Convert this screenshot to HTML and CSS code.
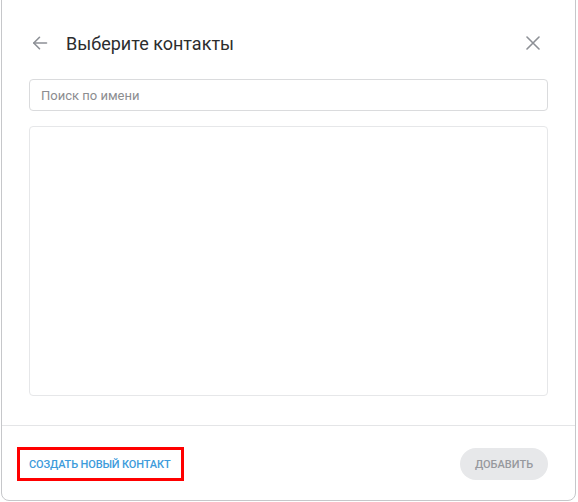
FILE: index.html
```html
<!DOCTYPE html>
<html lang="ru">
<head>
  <meta charset="UTF-8">
  <title>Выберите контакты</title>
  <link rel="stylesheet" href="styles.css">
</head>
<body>
  <div class="dialog">
    <div class="dialog-body">
      <div class="dialog-header">
        <button class="icon-btn back-btn" type="button" aria-label="Назад">
          <svg width="16" height="16" viewBox="0 0 16 16" fill="none" stroke="currentColor" stroke-width="1.6" stroke-linecap="round" stroke-linejoin="round">
            <path d="M14.5 8H1.8"/>
            <path d="M7.5 2.3L1.8 8l5.7 5.7"/>
          </svg>
        </button>
        <h2 class="dialog-title">Выберите контакты</h2>
        <button class="icon-btn close-btn" type="button" aria-label="Закрыть">
          <svg width="14" height="14" viewBox="0 0 14 14" fill="none" stroke="currentColor" stroke-width="1.6" stroke-linecap="round">
            <path d="M1 1l12 12M13 1L1 13"/>
          </svg>
        </button>
      </div>
      <input class="search" type="text" placeholder="Поиск по имени">
      <div class="contact-list"></div>
    </div>
    <div class="dialog-footer">
      <a class="create-link" href="#">Создать новый контакт</a>
      <button class="add-btn" type="button" disabled>Добавить</button>
    </div>
  </div>
</body>
</html>
```

FILE: styles.css
```css
html, body {
  margin: 0;
  height: 100%;
  overflow: hidden;
}
body {
  font-family: Roboto, "Noto Sans", Arial, sans-serif;
  background: #ffffff;
}
.dialog {
  width: 573px;
  margin: -10px 0 0 1px;
  background: #ffffff;
  border: 1px solid #c6c7ca;
  border-radius: 8px;
}
.dialog-body {
  padding: 34px 27px 29px;
}
.dialog-header {
  display: flex;
  align-items: center;
  height: 36px;
  margin-bottom: 18px;
}
.icon-btn {
  background: none;
  border: none;
  padding: 0;
  display: flex;
  align-items: center;
  justify-content: center;
  color: #8d9096;
  cursor: pointer;
}
.back-btn {
  margin-left: 3px;
  width: 16px;
  height: 16px;
}
.dialog-title {
  margin: 0 0 0 18px;
  flex: 1;
  font-size: 18px;
  font-weight: 400;
  color: #2c2d2e;
}
.close-btn {
  width: 14px;
  height: 14px;
  margin-right: 8px;
}
.search {
  display: block;
  width: 100%;
  height: 32px;
  box-sizing: border-box;
  padding: 0 11px;
  border: 1px solid #dadbdd;
  border-radius: 4px;
  font-family: inherit;
  font-size: 13px;
  color: #2c2d2e;
  outline: none;
  margin-bottom: 15px;
}
.search::placeholder {
  color: #8c8d90;
}
.contact-list {
  height: 270px;
  box-sizing: border-box;
  border: 1px solid #e6e7e9;
  border-radius: 4px;
}
.dialog-footer {
  display: flex;
  align-items: center;
  justify-content: space-between;
  border-top: 1px solid #e4e5e7;
  padding: 21px 27px 19px;
}
.create-link {
  margin-left: -12px;
  padding: 0 11px 0 9px;
  height: 28px;
  display: flex;
  align-items: center;
  border: 3px solid #ff0000;
  font-size: 11px;
  font-weight: 500;
  letter-spacing: -0.15px;
  text-transform: uppercase;
  text-decoration: none;
  color: #3d9bdb;
}
.add-btn {
  height: 32px;
  width: 88px;
  border: none;
  border-radius: 16px;
  background: #e7e8ea;
  color: #97999e;
  font-family: inherit;
  font-size: 11px;
  font-weight: 500;
  text-transform: uppercase;
  padding: 0;
}
```
